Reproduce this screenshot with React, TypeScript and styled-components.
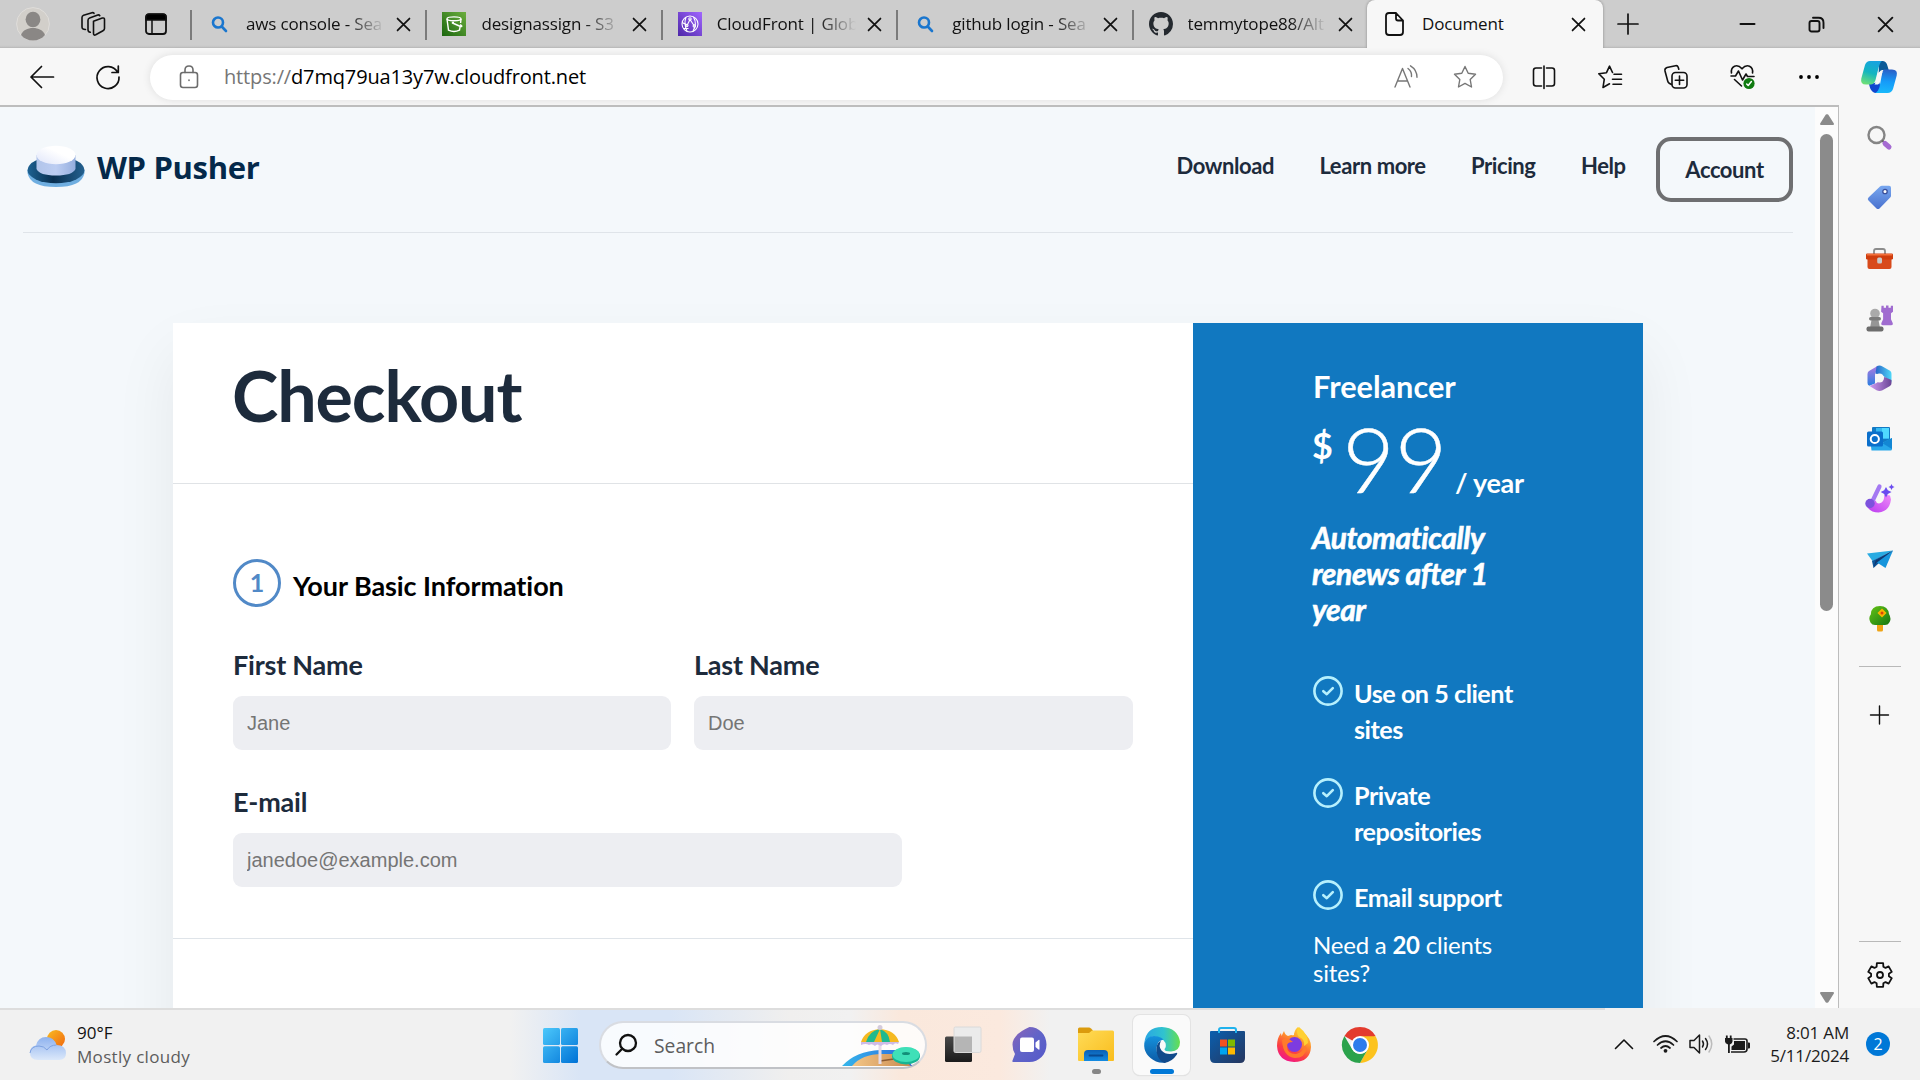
import React from "react";
import styled, { createGlobalStyle } from "styled-components";

const GlobalStyle = createGlobalStyle`
  *, *::before, *::after { box-sizing: border-box; }
  html, body { margin: 0; padding: 0; overflow: hidden; }
  body { background: #f7f7f7; }
  h1, h2, p, ul { margin: 0; padding: 0; }
  svg { display: block; flex: none; overflow: visible; }
`;

const ui = `"Open Sans", "Noto Sans", sans-serif`;
const lato = `Lato, "Open Sans", sans-serif`;

/* ---------- browser frame ---------- */

const Screen = styled.div`
  width: 1920px;
  height: 1080px;
  display: flex;
  flex-direction: column;
  overflow: hidden;
  font-family: ${ui};
  color: #111;
`;

const TabStrip = styled.header`
  height: 48px;
  display: flex;
  background: linear-gradient(#cdcdcd 45px, #c4c4c4 47px, #b4b4b4 48px);
`;

const StripTools = styled.div`
  width: 190px;
  display: flex;
  align-items: center;
  padding-left: 16px;
`;

const ToolSlot = styled.span<{ $w: number }>`
  width: ${(p) => p.$w}px;
  display: flex;
  justify-content: center;
`;

const TabItem = styled.div<{ $active?: boolean }>`
  width: ${(p) => (p.$active ? 236 : 235.4)}px;
  display: flex;
  align-items: center;
  padding: ${(p) => (p.$active ? "0 18px 0 15px" : "0 15px 0 16px")};
  background: ${(p) => (p.$active ? "#f7f7f7" : "transparent")};
  border-radius: ${(p) => (p.$active ? "8px 8px 0 0" : "0")};
  box-shadow: ${(p) => (p.$active ? "0 0 3px rgba(0,0,0,.35)" : "none")};
  clip-path: ${(p) => (p.$active ? "inset(0 -4px 0 -4px)" : "none")};
`;

const TabRule = styled.i`
  width: 2px;
  height: 30px;
  margin-top: 10px;
  margin-right: -2px;
  background: #7b7b7b;
`;

const Favicon = styled.span`
  width: 26px;
  display: flex;
  justify-content: center;
`;

const TabTitle = styled.span<{ $faded?: boolean }>`
  flex: 1;
  margin: 0 10px 0 14px;
  font-size: 17px;
  line-height: 24px;
  letter-spacing: -0.15px;
  white-space: nowrap;
  overflow: hidden;
  ${(p) =>
    p.$faded
      ? "-webkit-mask-image: linear-gradient(90deg,#000 calc(100% - 40px),transparent calc(100% - 2px)); mask-image: linear-gradient(90deg,#000 calc(100% - 40px),transparent calc(100% - 2px));"
      : ""}
`;

const WindowTools = styled.div`
  flex: 1;
  display: flex;
  align-items: center;
`;

const Push = styled.span`
  flex: 1;
`;

const Toolbar = styled.nav`
  height: 57px;
  display: flex;
  align-items: center;
  background: #f7f7f7;
  padding-left: 9px;
`;

const Address = styled.div`
  width: 1353px;
  height: 45px;
  margin: 1px 8px 0 9px;
  border-radius: 23px;
  background: #fff;
  box-shadow: 0 0 8px rgba(0, 0, 0, 0.1);
  display: flex;
  align-items: center;
  padding-left: 29px;
  padding-right: 18px;
`;

const Url = styled.span`
  flex: 1;
  margin-left: 25px;
  font-size: 20px;
  line-height: 30px;
  letter-spacing: -0.15px;
  color: #000;
  em {
    font-style: normal;
    color: #767676;
  }
`;

const Middle = styled.div`
  height: 903px;
  display: flex;
`;

const Frame = styled.div`
  width: 1839px;
  border-top: 2px solid #bdbdbd;
  border-right: 1px solid #bdbdbd;
  display: flex;
`;

const ScrollTrack = styled.div`
  width: 23px;
  background: #fcfcfc;
  display: flex;
  flex-direction: column;
  align-items: center;
  padding: 7px 0 5px;
`;

const ScrollThumb = styled.div`
  width: 13px;
  height: 477px;
  margin: 9px 0 auto;
  border-radius: 7px;
  background: #8b8b8b;
`;

const Sidebar = styled.aside`
  flex: 1;
  display: flex;
  flex-direction: column;
  align-items: center;
  background: #f7f7f7;
`;

const SideSlot = styled.span<{ $h?: number }>`
  height: ${(p) => p.$h ?? 60.2}px;
  display: flex;
  align-items: center;
`;

const SideRule = styled.i`
  width: 42px;
  height: 1px;
  margin-left: 1px;
  background: #b9b9b9;
`;

/* ---------- web page ---------- */

const Page = styled.main`
  width: 1815px;
  height: 901px;
  background: #f4f8fb;
  overflow: hidden;
  font-family: ${lato};
  color: #1d2b3c;
`;

const SiteHeader = styled.header`
  height: 126px;
  margin: 0 22px 0 23px;
  border-bottom: 1px solid #dfe4e9;
  display: flex;
`;

const Brand = styled.div`
  display: flex;
  margin: 38px auto 0 4px;
`;

const BrandName = styled.span`
  margin: 4px 0 0 12px;
  font: 700 31px/36px "Open Sans", sans-serif;
  letter-spacing: -0.35px;
  color: #04294a;
  height: 36px;
`;

const SiteNav = styled.nav`
  display: flex;
  gap: 45.4px;
  font-weight: 700;
  font-size: 22px;
  line-height: 26px;
  letter-spacing: -0.42px;
`;

const NavLink = styled.a`
  margin-top: 45.5px;
  height: 26px;
`;

const AccountButton = styled.a`
  width: 137px;
  height: 65px;
  margin: 30px 0 0 -15px;
  border: 4px solid #6e6f71;
  border-radius: 15px;
  display: flex;
  align-items: center;
  justify-content: center;
`;

const Card = styled.section`
  width: 1470px;
  height: 1100px;
  margin: 90px 0 0 173px;
  display: flex;
  background: #fff;
  box-shadow: 0 30px 60px rgba(0, 0, 0, 0.065);
`;

const FormSide = styled.div`
  width: 1020px;
`;

const CardTitle = styled.h1`
  height: 161px;
  padding: 30px 0 0 59px;
  border-bottom: 1px solid #e0e3e6;
  font-size: 70px;
  line-height: 84px;
  font-weight: 700;
  letter-spacing: -1.1px;
`;

const FormSection = styled.div`
  height: 455px;
  padding: 75px 0 0 60px;
  border-bottom: 1px solid #dfe4e9;
`;

const StepTitle = styled.div`
  display: flex;
  align-items: center;
  height: 48px;
  margin-bottom: 42px;
`;

const StepNumber = styled.span`
  width: 48px;
  height: 48px;
  border: 3px solid #5189c7;
  border-radius: 50%;
  color: #5189c7;
  display: flex;
  align-items: center;
  justify-content: center;
  font-size: 25px;
  padding-bottom: 2px;
  font-weight: 700;
`;

const StepName = styled.h2`
  margin-left: 12px;
  padding-top: 6px;
  color: #000;
  font-size: 27px;
  line-height: 32px;
  font-weight: 700;
  letter-spacing: -0.07px;
`;

const FieldRow = styled.div`
  display: flex;
  gap: 23px;
  margin-bottom: 35px;
`;

const Field = styled.label<{ $w: number }>`
  width: ${(p) => p.$w}px;
  display: flex;
  flex-direction: column;
  font-size: 27px;
  line-height: 32px;
  font-weight: 700;
  letter-spacing: -0.22px;
`;

const Input = styled.input`
  margin-top: 15px;
  margin-bottom: 1px;
  width: 100%;
  height: 54px;
  border: 0;
  border-radius: 9px;
  padding: 0 14px;
  background: #edeef2;
  font: 400 20px "Liberation Sans", Arial, sans-serif;
  &::placeholder {
    color: #757575;
    opacity: 1;
  }
`;

const PlanSide = styled.div`
  width: 450px;
  padding: 46px 112px 0 120px;
  background: #1178c0;
  color: #fff;
`;

const PlanName = styled.h2`
  font-size: 30.7px;
  line-height: 36px;
  font-weight: 700;
`;

const Price = styled.div`
  height: 107px;
  display: flex;
  white-space: nowrap;
`;

const Currency = styled.span`
  font-size: 36px;
  line-height: 43px;
  font-weight: 700;
  margin: 19px 0 0 -1px;
  flex: none;
  width: 30.5px;
`;

const Amount = styled.span`
  font-size: 90px;
  line-height: 107px;
  font-weight: 300;
  letter-spacing: 0.3px;
  -webkit-text-stroke: 0.5px #fff;
`;

const Period = styled.span`
  font-size: 27px;
  line-height: 32px;
  font-weight: 700;
  letter-spacing: -0.3px;
  margin: 62px 0 0 7.5px;
`;

const Renewal = styled.p`
  margin: 6.5px 0 0 -1px;
  font-size: 30px;
  line-height: 36px;
  font-weight: 700;
  font-style: italic;
  letter-spacing: -0.4px;
  -webkit-text-stroke: 0.6px #fff;
`;

const Features = styled.ul`
  margin-top: 48.5px;
  list-style: none;
  display: flex;
  flex-direction: column;
  gap: 30px;
`;

const Feature = styled.li`
  display: flex;
  gap: 11px;
  font-size: 25.2px;
  line-height: 36px;
  font-weight: 700;
  letter-spacing: -0.48px;
  svg {
    margin-top: 1px;
  }
`;

const Upsell = styled.p`
  margin-top: 16px;
  font-size: 24px;
  line-height: 28px;
  letter-spacing: -0.22px;
`;

/* ---------- taskbar ---------- */

const Taskbar = styled.footer`
  height: 72px;
  padding-top: 2px;
  display: flex;
  align-items: center;
  background:
    linear-gradient(#dddddd, #dddddd) 0 0 / 1605px 2px no-repeat,
    linear-gradient(90deg, transparent 510px, #d9e5f6 580px, #d9e5f6 670px, #f0efee 790px, transparent 850px, #fae8dc 900px, #fbe9de 1000px, transparent 1050px),
    #f1f1f1;
`;

const Weather = styled.div`
  width: 543px;
  padding-left: 29px;
  display: flex;
  align-items: center;
  gap: 10px;
  font-size: 17px;
  line-height: 24px;
  small {
    display: block;
    font-size: 17px;
    letter-spacing: 0.32px;
    color: #5c5c5c;
  }
`;

const SearchPill = styled.div`
  width: 328px;
  height: 48px;
  margin: 0 18px 0 21px;
  border: 2px solid #d9dce2;
  border-bottom-color: #c0c2c6;
  border-radius: 24px;
  background: rgba(255, 255, 255, 0.82);
  display: flex;
  align-items: center;
  padding-left: 14px;
  padding-right: 5px;
  font-size: 19.3px;
  color: #5d5d5d;
  span {
    margin: 0 auto 0 17px;
  }
`;

const AppTile = styled.div<{ $active?: boolean; $w?: number }>`
  width: ${(p) => p.$w ?? 66.3}px;
  height: 60px;
  display: flex;
  flex-direction: column;
  align-items: center;
  padding-top: 12px;
  background: ${(p) => (p.$active ? "#fafafa" : "transparent")};
  border-radius: 7px;
  box-shadow: ${(p) => (p.$active ? "0 0 0 1px #e3e3e3, 0 1px 1px #d5d5d5" : "none")};
  margin: ${(p) => (p.$active ? "0 4.3px" : "0")};
`;

const Running = styled.i<{ $active?: boolean }>`
  width: ${(p) => (p.$active ? 24 : 9)}px;
  height: 5px;
  margin-top: ${(p) => (p.$active ? 6 : 8)}px;
  border-radius: 3px;
  background: ${(p) => (p.$active ? "#0078d7" : "#868686")};
`;

const Tray = styled.div`
  display: flex;
  align-items: center;
  padding-bottom: 2px;
`;

const Clock = styled.div`
  width: 90px;
  text-align: right;
  font-size: 17px;
  line-height: 23px;
  letter-spacing: -0.2px;
  margin: 0 17px 0 4px;
  color: #1b1b1b;
  white-space: nowrap;
`;

const Badge = styled.span`
  width: 24px;
  height: 24px;
  margin-right: 30px;
  border-radius: 50%;
  background: #0078d7;
  color: #fff;
  font-size: 16px;
  line-height: 24px;
  text-align: center;
`;

/* ---------- drawings ---------- */

type LineProps = { w?: number; h?: number; box?: string; color?: string; sw?: number; children: React.ReactNode };
const Line = ({ w = 24, h = w, box = "0 0 24 24", color = "#111", sw = 1.6, children }: LineProps) => (
  <svg width={w} height={h} viewBox={box} fill="none" stroke={color} strokeWidth={sw} strokeLinecap="round" strokeLinejoin="round">
    {children}
  </svg>
);

const Cross = ({ s = 13, sw = 1.6 }: { s?: number; sw?: number }) => (
  <Line w={s} box="0 0 12 12" sw={sw}><path d="M.5.5l11 11M11.5.5l-11 11" /></Line>
);

const Avatar = () => (
  <svg width="34" height="34" viewBox="0 0 34 34">
    <circle cx="17" cy="17" r="16.4" fill="#d2cfca" stroke="#e0dedb" />
    <ellipse cx="17" cy="12.5" rx="7.4" ry="7.7" fill="#8a8785" />
    <path d="M5 28c2-5 6.500-7 12-7s10 2 12 7c-3 3.600-7 5.500-12 5.500S8 31.600 5 28z" fill="#8a8785" />
  </svg>
);

const WorkspacesIcon = () => (
  <Line w={24} h={24} box="0 0 24 24" sw={1.6}>
    <path d="M12.500 9.300l8.800-3.200q2.200-.6 2.200 1.500v9q0 1.500-1.500 2.200l-7.300 4q-2.200 1-2.200-1.500z" />
    <path d="M9.300 20.300q-2.300-.4-2.300-2.500V8.200q0-1.600 1.600-2.200l8.200-3q1.300-.4 2 .7" />
    <path d="M4.500 17.500Q1 17.600 1 15V5.500q0-1.600 1.600-2.200L11 .8q1.300-.4 2 .5" />
  </Line>
);

const VerticalTabsIcon = () => (
  <svg width="22" height="22" viewBox="0 0 22 22">
    <rect x="1" y="1.500" width="20" height="19.500" rx="3" fill="none" stroke="#111" strokeWidth="1.800" />
    <path d="M1 7V4q0-3 3-3h14q3 0 3 3v3zM7 7v14" fill="#000" stroke="#111" strokeWidth="1.500" />
  </svg>
);

const BingGlass = () => (
  <Line w={17} box="0 0 17 17" color="#1a76ce" sw={2.6}><circle cx="7" cy="6.500" r="5" /><path d="M10.700 10.500l4.300 4.500" /></Line>
);

const BucketIcon = () => (
  <svg width="24" height="24" viewBox="0 0 24 24">
    <defs><linearGradient id="s3" x1="0" y1="1" x2="1" y2="0"><stop stopColor="#1b660f" /><stop offset="1" stopColor="#6cae3e" /></linearGradient></defs>
    <path fill="url(#s3)" d="M0 0h24v24H0z" />
    <g fill="none" stroke="#fff" strokeWidth="1.400"><ellipse cx="12" cy="6.800" rx="7" ry="1.900" /><path d="M5 7l1.500 11.200q5.500 2.500 11 0l.8-4.500M19 7l-.4 4M10.500 11l8 3.500q1.500.5 1.200-.7l-1.500-1.300" /><path d="M9.800 10.700h2.200" strokeWidth="2" /></g>
  </svg>
);

const CloudFrontIcon = () => (
  <svg width="24" height="24" viewBox="0 0 24 24">
    <defs><linearGradient id="cf" x1="0" y1="1" x2="1" y2="0"><stop stopColor="#4d27a8" /><stop offset="1" stopColor="#a166ff" /></linearGradient></defs>
    <path fill="url(#cf)" d="M0 0h24v24H0z" />
    <g fill="none" stroke="#fff" strokeWidth="1.100"><circle cx="12" cy="12" r="8" /><path d="M8 5q-2.500 7 1 14M15.500 5q4 7-.5 14M4.300 10.500l5 3M12 7.500l4 6M9 13.500l3-6M5.500 16.500h5" /><circle cx="12" cy="7" r="1.200" /><circle cx="16.300" cy="14" r="1.200" /><circle cx="8.800" cy="13.500" r="1.200" /></g>
  </svg>
);

const GithubMark = () => (
  <svg width="24" height="24" viewBox="0 0 16 16" fill="#24292f">
    <path d="M8 0C3.580 0 0 3.580 0 8c0 3.540 2.290 6.530 5.470 7.590.4.070.55-.17.55-.38 0-.19-.01-.82-.01-1.490-2.010.37-2.530-.49-2.690-.94-.09-.23-.48-.94-.82-1.130-.28-.15-.68-.52-.01-.53.63-.01 1.080.58 1.230.82.72 1.210 1.870.87 2.330.66.070-.52.28-.87.51-1.070-1.780-.2-3.640-.89-3.640-3.950 0-.87.31-1.590.82-2.150-.08-.2-.36-1.020.08-2.120 0 0 .67-.21 2.200.82.64-.18 1.320-.27 2-.27s1.360.09 2 .27c1.530-1.040 2.200-.82 2.200-.82.44 1.100.16 1.920.08 2.120.51.56.82 1.270.82 2.150 0 3.070-1.870 3.750-3.650 3.950.29.25.54.73.54 1.480 0 1.070-.01 1.930-.01 2.200 0 .21.15.46.55.38A8.010 8.010 0 0016 8c0-4.420-3.580-8-8-8z" />
  </svg>
);

const FileIcon = () => (
  <Line w={19} h={24} box="0 0 19 24" sw={1.8}><path d="M11 1H4Q1 1 1 4v16q0 3 3 3h11q3 0 3-3V8.500zM11 1v5.500q0 2 2 2h5" /></Line>
);

const StarPath = "M12 1.500l3.200 6.800 7.300 1-5.300 5.200 1.300 7.500L12 18.400 5.500 22l1.300-7.500L1.500 9.300l7.300-1z";

const FavoritesIcon = () => (
  <Line><path d="M14.500 7.500L11.500 1.200 8.500 7.700.8 8.800l5.500 5.400L5 22.500l6.500-3.700M16 9.300h7.500M14.500 14.200h9M15 19.200h8.500" /></Line>
);

const CollectionsIcon = () => (
  <Line><rect x="8" y="7.500" width="15" height="15.500" rx="3.500" /><path d="M15.500 11v8.500M11.300 15.300h8.400M7.500 19.500l-2.300-1.300q-1.200-.7-1.500-2.200L1 6Q.500 3.300 3 2.500L11.500.7q2-.4 2.700 1.500l.6 2" /></Line>
);

const HealthIcon = () => (
  <svg width="26" height="26" viewBox="0 0 26 26" fill="none" stroke="#111" strokeWidth="1.600" strokeLinecap="round" strokeLinejoin="round">
    <path d="M1.500 9Q.700 4 4.500 2.200 8.500.7 12 4.800 15.500.7 19.500 2.200 23.300 4 22.500 9M1 12h4.500l3-5 4 9 3.500-6 1.500 2.500H24M4.500 15.500l7 6.500" />
    <circle cx="19" cy="19.500" r="5.600" fill="#0f7b10" stroke="none" /><path d="M16.700 20l1.500 1.500 3.200-4" stroke="#fff" strokeWidth="1.500" />
  </svg>
);

const CopilotLogo = () => (
  <svg width="36" height="32" viewBox="0 0 36 32">
    <defs>
      <linearGradient id="cpA" x1=".6" y1="0" x2=".3" y2="1"><stop stopColor="#17a3e0" /><stop offset=".5" stopColor="#13b5c0" /><stop offset="1" stopColor="#6ddf78" /></linearGradient>
      <linearGradient id="cpB" x1=".5" y1="0" x2=".4" y2="1"><stop stopColor="#2a60c8" /><stop offset=".5" stopColor="#159af8" /><stop offset="1" stopColor="#19b9fb" /></linearGradient>
    </defs>
    <path d="M18 0h4q3.500.5 4.500 5l1.200 4h-6q-3 0-4 4z" fill="#0b5a97" />
    <path d="M8 23q1.500 8 6 9h8l-4-11z" fill="#1146cf" />
    <path d="M9 0h12q-2 1-3.500 7l-3 12q-1.500 4.500-5 4.500H5q-6 0-4.700-6L4 4Q5.500 0 9 0z" fill="url(#cpA)" />
    <path d="M23 8.500h8q6 0 4.700 6L32 28q-1.500 4-5.500 4H14q3-1 4.500-6L21 13q1-4.500 2-4.500z" fill="url(#cpB)" />
    <path d="M18.500 11h3q-.8 1.500-1.300 3.500l-1.700 6.500q-.5 2-1.500 2.500h-3.500q1-1.500 1.700-4.500l1.600-6q.4-1.700 1.700-2z" fill="#f7f7f7" />
  </svg>
);

const Triangle = ({ down }: { down?: boolean }) => (
  <svg width="14" height="11" viewBox="0 0 14 11" fill="#8b8b8b" stroke="#8b8b8b" strokeLinejoin="round" strokeWidth="2">
    <path d={down ? "M1 1h12L7.500 9.800h-1z" : "M1 10h12L7.500 1.200h-1z"} />
  </svg>
);

const WpPusherMark = () => (
  <svg width="58" height="43" viewBox="0 0 58 43">
    <defs>
      <linearGradient id="wpSide"><stop stopColor="#b2c5ea" /><stop offset=".5" stopColor="#bccdf2" /><stop offset="1" stopColor="#95aede" /></linearGradient>
      <linearGradient id="wpTop" x1="0" y1="1" x2="1" y2="0"><stop stopColor="#dfe5fa" /><stop offset=".6" stopColor="#fff" /></linearGradient>
      <linearGradient id="wpRing"><stop stopColor="#1e6292" /><stop offset=".45" stopColor="#082f50" /><stop offset="1" stopColor="#24618f" /></linearGradient>
    </defs>
    <path d="M.5 25v3Q3 42 29 42t28.500-14v-3z" fill="#6faee0" />
    <ellipse cx="29" cy="25" rx="28.500" ry="13.300" fill="url(#wpRing)" />
    <path d="M9.500 10v14q3 6.500 19.500 6.500T48.500 24V10z" fill="url(#wpSide)" />
    <ellipse cx="29" cy="10" rx="19.500" ry="9.300" fill="url(#wpTop)" />
  </svg>
);

const CheckCircle = () => (
  <Line w={30} box="0 0 30 30" color="#b6f0fd" sw={2.6}><circle cx="15" cy="15" r="13.600" /><path d="M10.300 15.200l3.500 3 6-6" /></Line>
);

const SideSearch = () => (
  <svg width="25" height="24" viewBox="0 0 25 24" fill="none"><circle cx="9.500" cy="9" r="8" stroke="#858585" strokeWidth="2.400" /><path d="M15 14.500l2 1.800" stroke="#666" strokeWidth="2.200" /><path d="M18 17.500l4 3.500" stroke="#a56bd2" strokeWidth="5" strokeLinecap="round" /></svg>
);
const SideTag = () => (
  <svg width="25" height="25" viewBox="0 0 25 25"><defs><linearGradient id="tg" x1="0" y1="0" x2="0" y2="1"><stop stopColor="#78a7ef" /><stop offset="1" stopColor="#4a72cf" /></linearGradient></defs><path d="M13 1.500q.7-.7 2-.7h7q2 0 2 2v8q0 1-.8 1.800L12.500 23.400q-1.500 1-3 0L1.500 15.500q-1.500-1.700 0-3z" fill="url(#tg)" /><circle cx="18" cy="6.500" r="2.200" fill="#fff" stroke="#3a4f9b" strokeWidth="1.300" /></svg>
);
const SideToolbox = () => (
  <svg width="27" height="21" viewBox="0 0 27 21"><path d="M8 6V3q0-2 2-2h7q2 0 2 2v3" fill="none" stroke="#8c8c8c" strokeWidth="1.800" /><rect x="1.500" y="9" width="24" height="12" rx="2" fill="#d84a1b" /><rect y="5.500" width="27" height="6" rx="1.200" fill="#cf3d0e" /><path d="M1 6h25v1.500H1z" fill="#f3703a" /><rect x="11.200" y="9.500" width="4.800" height="6" rx="1.500" fill="#c9c9c9" /></svg>
);
const SideChess = () => (
  <svg width="27" height="27" viewBox="0 0 27 27"><path d="M15.500.8h2.200v2h2.300V.5h2.500v2.300h2.300v-2H27v6l-2 1.500v6l1.800 4q.5 2-1.500 2h-8.500q-2 0-1.500-2l1.800-4v-6l-2-1.500z" fill="#a06cd0" /><circle cx="9" cy="8.500" r="4.800" fill="#aaa" /><path d="M5.500 15h7l1.500 8H4z" fill="#969696" /><rect x="3" y="12" width="12" height="3.500" rx="1.700" fill="#7c7c7c" /><rect x=".5" y="21.500" width="17" height="5" rx="2" fill="#6d6d6d" /></svg>
);
const Side365 = () => (
  <svg width="25" height="26" viewBox="0 0 25 26"><defs><linearGradient id="o1" x1="0" y1="0" x2="0" y2="1"><stop stopColor="#b07be0" /><stop offset="1" stopColor="#2a7de0" /></linearGradient><linearGradient id="o2"><stop stopColor="#2864c8" /><stop offset="1" stopColor="#4fd8f8" /></linearGradient><linearGradient id="o3"><stop stopColor="#cf9af2" /><stop offset="1" stopColor="#6a4696" /></linearGradient></defs><path d="M11 .8L2 6Q.500 7 .500 9v9q0 2 1.800 2.800L8 18.500V9.500z" fill="url(#o1)" /><path d="M9.500 1.500q3-2 6 0l7.500 4.300q1.500 1 1.500 3V17L17 11.500l-8.500-3z" fill="url(#o2)" /><path d="M2.500 21l7-3 8-6 7 3v3q0 2-1.500 3l-7.500 4.200q-3 1.500-6 0z" fill="url(#o3)" /><circle cx="12.500" cy="13" r="4.500" fill="#f7f7f7" /></svg>
);
const SideOutlook = () => (
  <svg width="25" height="24" viewBox="0 0 25 24"><rect x="5" y="0" width="18" height="15" rx="1" fill="#1279c4" /><path d="M9 1h13v11H9z" fill="#35b8f1" /><path d="M15 1h7v10h-7z" fill="#50d9ff" /><path d="M3.500 15.500H16l9-4.500v11q0 1.500-1.500 1.500h-19z" fill="#28a8ea" /><path d="M15 16l10-5v11z" fill="#1387d4" /><rect x="0" y="4.500" width="16" height="15" rx="1.500" fill="#0a6fcb" /><circle cx="7.800" cy="12" r="4.100" fill="none" stroke="#fff" strokeWidth="2" /></svg>
);
const SideDesigner = () => (
  <svg width="29" height="29" viewBox="0 0 29 29"><defs><linearGradient id="ds" x1="0" y1="1" x2="1" y2="0"><stop stopColor="#b838f0" /><stop offset="1" stopColor="#f08cf8" /></linearGradient></defs><path d="M1.500 22q4 6.500 12 6.500 11-1 12.500-13l-1-4-6-1q1 8-5 9-3 0-3-3z" fill="url(#ds)" /><path d="M14.500 2.500L7.500 17" stroke="#a479f2" strokeWidth="4.200" strokeLinecap="round" /><circle cx="5" cy="19.500" r="4.700" fill="#7d52dd" /><path d="M21 3l1.800 3.300L26.500 8l-3.700 2L21 13.500 19.200 10l-3.500-2 3.500-1.700zM26.500 0l1 2 2 1-2 1-1 2-1-2-2-1 2-1z" fill="#6a4bf0" /></svg>
);
const SidePlane = () => (
  <svg width="26" height="19" viewBox="0 0 26 19"><path d="M0 3.500L26 .5 5.500 11z" fill="#29abe2" /><path d="M26 .5L5 11l1.500 7z" fill="#0d569b" /><path d="M26 .5L18.500 18 10 12.500z" fill="#1795dc" /><path d="M26 .5L9.500 12.500 6.500 18l2-7.500z" fill="#12386f" /></svg>
);
const SideTree = () => (
  <svg width="22" height="26" viewBox="0 0 22 26"><defs><linearGradient id="tr" x1="0" y1="0" x2="1" y2="1"><stop stopColor="#66c414" /><stop offset="1" stopColor="#157714" /></linearGradient></defs><path d="M8 16h6v8q0 1.500-1.500 1.500h-3Q8 25.500 8 24z" fill="#efa416" /><path d="M11 0q8 0 9 8 3 5 0 9-1 2-4 2H6q-3 0-4.500-2.500Q-1 12 1.800 8.500 2 0 11 0z" fill="url(#tr)" /><path d="M13 3.500L16.500 7 13 10.500 9.500 7z" fill="#f7b500" stroke="#f7b500" strokeWidth="1.500" /><circle cx="13" cy="7" r="1.500" fill="#d9420b" /></svg>
);
const gearPoints = () => {
  let d = "";
  for (let i = 0; i < 6; i++) {
    const a = i * 60 - 90;
    [[-22, 9], [-15, 12.2], [15, 12.2], [22, 9]].forEach(([o, r], j) => {
      const t = ((a + o) * Math.PI) / 180;
      d += `${i === 0 && j === 0 ? "M" : "L"}${(13 + r * Math.cos(t)).toFixed(2)} ${(13 + r * Math.sin(t)).toFixed(2)}`;
    });
  }
  return d + "Z";
};
const Gear = () => (
  <Line w={26} box="0 0 26 26" sw={1.8}><path d={gearPoints()} /><circle cx="13" cy="13" r="3" /></Line>
);

const WeatherIcon = () => (
  <svg width="38" height="31" viewBox="0 0 38 31"><defs><linearGradient id="cl" x1="0" y1="0" x2="0" y2="1"><stop stopColor="#8eb2ef" /><stop offset="1" stopColor="#dbe8fa" /></linearGradient><linearGradient id="sn" x1="0" y1="0" x2="1" y2="1"><stop stopColor="#f9bc22" /><stop offset="1" stopColor="#f1660e" /></linearGradient></defs><circle cx="27" cy="9" r="9" fill="url(#sn)" /><path d="M9 30q-8 0-8-7.500 0-6 6-7Q9 7 17 7q8 0 10.500 8Q36.500 15 37 23q0 7-7 7z" fill="url(#cl)" /><path d="M1 23q1 -7 9-7 5 0 8 4 3-5 9.500-5" fill="none" stroke="#7ea2e2" strokeWidth="1" /></svg>
);
const WindowsLogo = () => (
  <svg width="35" height="35" viewBox="0 0 35 35"><defs><linearGradient id="wn" gradientUnits="userSpaceOnUse" x1="0" y1="0" x2="35" y2="35"><stop stopColor="#4cc8fb" /><stop offset="1" stopColor="#0072d6" /></linearGradient></defs><g fill="url(#wn)"><rect width="17" height="17" rx="1.500" /><rect x="18" width="17" height="17" rx="1.500" /><rect y="18.300" width="17" height="16.700" rx="1.500" /><rect x="18" y="18.300" width="17" height="16.700" rx="1.500" /></g></svg>
);
const BeachArt = () => (
  <svg width="78" height="41" viewBox="0 0 78 41">
    <defs><linearGradient id="sea"><stop stopColor="#35b6ea" /><stop offset="1" stopColor="#2c66df" /></linearGradient><linearGradient id="sand"><stop stopColor="#f3c687" /><stop offset="1" stopColor="#c98a50" /></linearGradient></defs>
    <path d="M0 41Q14 26 38 25h22l10 16z" fill="url(#sea)" />
    <path d="M10 41Q20 29 40 29h15l14 12z" fill="url(#sand)" />
    <path d="M38 36l14-2" stroke="#8c5a32" strokeWidth="1.500" />
    <path d="M38 3v36" stroke="#e5dbe8" strokeWidth="3" />
    <path d="M19 17Q23 5 38 4q15 1 19 13z" fill="#f5b921" />
    <path d="M24 17Q27 6 38 4l-6 13zM38 4q9 3 10 13h-8z" fill="#1fb98e" />
    <path d="M19 17h38l-1 2q-3-2-5 1-3-2-6 0-3-2-6 1-4-3-6 0-3-3-6-1-3-2-8 0z" fill="#cdbbe8" />
    <circle cx="38" cy="2.500" r="2.500" fill="#d5cbdc" />
    <ellipse cx="64" cy="31" rx="14" ry="8.500" fill="#18b493" /><ellipse cx="64" cy="29.500" rx="13.500" ry="7.500" fill="#3fe0b8" /><ellipse cx="64" cy="28.500" rx="4" ry="1.500" fill="#128f78" />
  </svg>
);
const TaskView = () => (
  <svg width="36" height="35" viewBox="0 0 36 35"><defs><linearGradient id="tv" x1="0" y1="0" x2="0" y2="1"><stop stopColor="#494949" /><stop offset="1" stopColor="#1b1b1b" /></linearGradient></defs><rect y="9.500" width="27" height="25.500" rx="1.500" fill="url(#tv)" /><rect x="9" width="27" height="25.500" rx="1.500" fill="#ebebeb" stroke="#dadada" /><path d="M9.500 9.500H27V25H9.500z" fill="#b5b5b5" /></svg>
);
const ChatIcon = () => (
  <svg width="35" height="35" viewBox="0 0 35 35"><defs><linearGradient id="ch" x1="0" y1="0" x2="1" y2="1"><stop stopColor="#8b63b8" /><stop offset=".5" stopColor="#6064c8" /><stop offset="1" stopColor="#5558c9" /></linearGradient></defs><path d="M17.500 0C27 0 34.500 7.500 34.500 17.500S27 35 17.500 35H1q-1 0-.5-1.500L3 27Q.500 23 .500 17.500.500 7.500 17.500 0z" fill="url(#ch)" /><rect x="8" y="10.500" width="14" height="14.500" rx="2" fill="#fff" /><path d="M23.500 15.500l3-2.500q1-.5 1 .5V22q0 1-1 .5l-3-2.500z" fill="#fff" /></svg>
);
const FolderIcon = () => (
  <svg width="36" height="34" viewBox="0 0 36 34"><defs><linearGradient id="fo" x1="0" y1="0" x2="1" y2="1"><stop stopColor="#ffdb57" /><stop offset="1" stopColor="#f9bd1d" /></linearGradient><linearGradient id="fb" x1="0" y1="0" x2="0" y2="1"><stop stopColor="#0c60b4" /><stop offset="1" stopColor="#148be2" /></linearGradient></defs><path d="M0 2Q0 .5 1.500.5H11q1 0 2 1l2 2L12 7H0z" fill="#db9b0d" /><path d="M0 6h11l3-2.500h20.500q1.500 0 1.500 1.500v28q0 1-1 1H1q-1 0-1-1z" fill="url(#fo)" /><path d="M6 34V27q0-4 4-4h16q4 0 4 4v7z" fill="url(#fb)" /><path d="M11.500 28.500h13" stroke="#084a92" strokeWidth="1.800" strokeLinecap="round" /></svg>
);
const EdgeIcon = () => (
  <svg width="36" height="36" viewBox="0 0 36 36"><defs><linearGradient id="e1"><stop stopColor="#2aa6e4" /><stop offset=".55" stopColor="#30c3cf" /><stop offset="1" stopColor="#66df4e" /></linearGradient><linearGradient id="e2" x1="0" y1="0" x2="0" y2="1"><stop stopColor="#1592dd" /><stop offset="1" stopColor="#0c59a4" /></linearGradient></defs><path d="M.3 16Q2 0 18 0q16 1 18 15 0 9-9 9.500-7 0-6.500-2.500 2-2 1-6Q18 10 10 9.500q-7 .5-9.700 6.500z" fill="url(#e1)" /><path d="M.3 16Q3 9 10 9q6 0 9.500 3.500-6 1-7 8Q12 30 22 35.500q-5 1-10-1Q-1 28 .3 16z" fill="url(#e2)" /><path d="M12.500 21q.5-5.500 4.500-7-3 5 .5 9.500 5 5.500 14.500 2.500 2-.7.9 1.500-5 7.500-12.500 8.500-8.500-4-7.900-15z" fill="#114a8b" /></svg>
);
const StoreIcon = () => (
  <svg width="35" height="36" viewBox="0 0 35 36"><defs><linearGradient id="st" x1="0" y1="0" x2="1" y2="1"><stop stopColor="#0a5fae" /><stop offset="1" stopColor="#26365e" /></linearGradient></defs><path d="M9 6V3q0-2 2-2h13q2 0 2 2v3" fill="none" stroke="#1fb2ed" strokeWidth="2" /><path d="M0 5q0-1 1-1h33q1 0 1 1v26q0 5-5 5H5q-5 0-5-5z" fill="url(#st)" /><path d="M9 6V4M26 6V4" stroke="#1fb2ed" strokeWidth="2" /><path d="M10 12.500h7v7h-7z" fill="#f25022" /><path d="M18 12.500h7v7h-7z" fill="#7fba00" /><path d="M10 20.500h7v7h-7z" fill="#00a4ef" /><path d="M18 20.500h7v7h-7z" fill="#ffb900" /></svg>
);
const FirefoxIcon = () => (
  <svg width="35" height="36" viewBox="0 0 35 36"><defs><linearGradient id="ff" x1=".8" y1="0" x2=".3" y2="1"><stop stopColor="#ffe03a" /><stop offset=".35" stopColor="#ff9a2a" /><stop offset=".7" stopColor="#fb4040" /><stop offset="1" stopColor="#f0148c" /></linearGradient></defs><path d="M21 0q3 2 4 6 1-1 1-1 8 6 8 15-1 15-17 15Q1 34 0 19 0 11 4 6l.5 3L7 4q1 4 4 5l3-1q4 1 3-1 1-5 4-7z" fill="url(#ff)" /><circle cx="17.500" cy="17.500" r="7.500" fill="#7d3be0" /><path d="M5 13q4-3 7-1l4 3q-6 0-6 4 0 8 9 8 8-2 8-9l3 3q-2 10-12 10Q6 30 5 13z" fill="#ff7a2c" /><path d="M22 10q6 2 5 9l4-3Q31 7 22 0q-4 5 0 10z" fill="#ffd033" /></svg>
);
const ChromeIcon = () => (
  <svg width="36" height="36" viewBox="0 0 36 36"><path d="M18 18L2.410 9A18 18 0 0 1 33.590 9z" fill="#e33b2e" /><path d="M18 9.200H33.600A18 18 0 0 1 18 36l7.700-13.500z" fill="#fcc31e" /><path d="M2.410 9L10.300 22.500A9 9 0 0 0 25.700 22.500L18 36A18 18 0 0 1 2.410 9z" fill="#2ba24c" /><circle cx="18" cy="18" r="9" fill="#fff" /><circle cx="18" cy="18" r="7" fill="#2f7cec" /></svg>
);
const WifiIcon = () => (
  <svg width="25" height="18" viewBox="0 0 25 18" fill="none" stroke="#1b1b1b" strokeWidth="1.700" strokeLinecap="round"><path d="M1 6.500q11.500-11 23 0M4.500 10q8-7.500 16 0M8 13q4.500-4 9 0" /><circle cx="12.500" cy="15.800" r="1.900" fill="#1b1b1b" stroke="none" /></svg>
);
const SpeakerIcon = () => (
  <svg width="25" height="20" viewBox="0 0 25 20" fill="none" stroke="#1b1b1b" strokeWidth="1.500" strokeLinecap="round" strokeLinejoin="round"><path d="M1 6.500h4L10.500 1v18L5 13.500H1zM13.500 7q2 3 0 6M16.500 4.500q4 5.500 0 11" /><path d="M20 2q5.500 8 0 16" stroke="#bcbcbc" /></svg>
);
const BatteryIcon = () => (
  <svg width="25" height="19" viewBox="0 0 25 19"><path d="M8.500 4H20q2 0 2 2v8q0 3-3 3H6" fill="none" stroke="#1b1b1b" strokeWidth="1.600" /><path d="M9 6h11v9H6.500v-3.500L9 9.500zM23 7.500h1q1 0 1 1v4q0 1-1 1h-1z" fill="#1b1b1b" /><path d="M1.800.5v3M5.700.5v3" stroke="#1b1b1b" strokeWidth="1.800" /><path d="M0 3h7.500v3.500q0 2-2.700 3V18H3V9.500q-3-1-3-3z" fill="#1b1b1b" /></svg>
);

/* ---------- composition ---------- */

const tabs = [
  { title: "aws console - Sea", icon: <BingGlass /> },
  { title: "designassign - S3", icon: <BucketIcon /> },
  { title: "CloudFront | Glob", icon: <CloudFrontIcon /> },
  { title: "github login - Sea", icon: <BingGlass /> },
  { title: "temmytope88/Alt", icon: <GithubMark /> },
];

const toolbarIcons = [
  <Line key="split"><path d="M9.500 3H4Q1.500 3 1.500 5.500v13Q1.500 21 4 21h5.500M14.500 3H20q2.500 0 2.500 2.500v13Q22.500 21 20 21h-5.500M12 1v22.500" /></Line>,
  <FavoritesIcon key="fav" />,
  <CollectionsIcon key="col" />,
  <HealthIcon key="health" />,
  <svg key="more" width="20" height="4" viewBox="0 0 20 4"><circle cx="2" cy="2" r="1.900" /><circle cx="10" cy="2" r="1.900" /><circle cx="18" cy="2" r="1.900" /></svg>,
];

const sideIcons = [SideSearch, SideTag, SideToolbox, SideChess, Side365, SideOutlook, SideDesigner, SidePlane, SideTree];

const features = ["Use on 5 client sites", "Private repositories", "Email support"];

const BrowserTabs = () => (
  <TabStrip>
    <StripTools>
      <ToolSlot $w={34}><Avatar /></ToolSlot>
      <ToolSlot $w={86}><WorkspacesIcon /></ToolSlot>
      <ToolSlot $w={40}><VerticalTabsIcon /></ToolSlot>
    </StripTools>
    {tabs.map((t) => (
      <React.Fragment key={t.title}>
        <TabRule />
        <TabItem>
          <Favicon>{t.icon}</Favicon>
          <TabTitle $faded>{t.title}</TabTitle>
          <Cross />
        </TabItem>
      </React.Fragment>
    ))}
    <TabItem $active>
      <Favicon><FileIcon /></Favicon>
      <TabTitle>Document</TabTitle>
      <Cross />
    </TabItem>
    <WindowTools>
      <ToolSlot $w={50}><Line w={20} box="0 0 20 20" sw={1.7}><path d="M10 0v20M0 10h20" /></Line></ToolSlot>
      <Push />
      <ToolSlot $w={69}><Line w={15} h={2} box="0 0 15 2" sw={2}><path d="M.5 1h14" /></Line></ToolSlot>
      <ToolSlot $w={69}><Line w={15} box="0 0 15 15" sw={1.9}><rect x="0.500" y="4" width="10" height="10.500" rx="2" /><path d="M4 .8h5.500q5 0 5 5V11" /></Line></ToolSlot>
      <ToolSlot $w={69}><Cross s={15} sw={1.5} /></ToolSlot>
    </WindowTools>
  </TabStrip>
);

const BrowserToolbar = () => (
  <Toolbar>
    <ToolSlot $w={66}><Line sw={1.7}><path d="M23.500 12H1M11.500 1.500L1 12l10.500 10.500" /></Line></ToolSlot>
    <ToolSlot $w={66}><Line w={24} sw={1.7}><path d="M21.500 7A11 11 0 1 0 23 12M22.300 1v6.500H16" /></Line></ToolSlot>
    <Address>
      <Line w={20} h={24} box="0 0 20 24" color="#6c6c6c"><rect x="1.500" y="7.500" width="17" height="15" rx="2.500" /><path d="M6 7.500V5q0-4 4-4t4 4v2.500M10 15v.4" /></Line>
      <Url><em>https://</em>d7mq79ua13y7w.cloudfront.net</Url>
      <ToolSlot $w={78}>
        <Line color="#777" sw={1.4}><path d="M1 22L8.500 3.500 16 22M3.700 16h9.700M14 3.500q4 3 3.500 8M16.500.8q6.500 4 6.500 11.500" /></Line>
      </ToolSlot>
      <ToolSlot $w={40}><Line color="#777" sw={1.4}><path d={StarPath} /></Line></ToolSlot>
    </Address>
    {toolbarIcons.map((icon) => (
      <ToolSlot key={icon.key} $w={66.2}>{icon}</ToolSlot>
    ))}
    <ToolSlot $w={74}><CopilotLogo /></ToolSlot>
  </Toolbar>
);

const CheckoutPage = () => (
  <Page>
    <SiteHeader>
      <Brand><WpPusherMark /><BrandName>WP Pusher</BrandName></Brand>
      <SiteNav>
        {["Download", "Learn more", "Pricing", "Help"].map((n) => <NavLink key={n}>{n}</NavLink>)}
        <AccountButton>Account</AccountButton>
      </SiteNav>
    </SiteHeader>
    <Card>
      <FormSide>
        <CardTitle>Checkout</CardTitle>
        <FormSection>
          <StepTitle><StepNumber>1</StepNumber><StepName>Your Basic Information</StepName></StepTitle>
          <FieldRow>
            <Field $w={438}>First Name<Input placeholder="Jane" /></Field>
            <Field $w={439}>Last Name<Input placeholder="Doe" /></Field>
          </FieldRow>
          <FieldRow>
            <Field $w={669}>E-mail<Input placeholder="janedoe@example.com" /></Field>
          </FieldRow>
        </FormSection>
      </FormSide>
      <PlanSide>
        <PlanName>Freelancer</PlanName>
        <Price><Currency>$</Currency><Amount>99</Amount><Period>/ year</Period></Price>
        <Renewal>Automatically renews after 1 year</Renewal>
        <Features>
          {features.map((f) => <Feature key={f}><CheckCircle /><span>{f}</span></Feature>)}
        </Features>
        <Upsell>Need a <b>20</b> clients sites?</Upsell>
      </PlanSide>
    </Card>
  </Page>
);

export default function App() {
  return (
    <Screen>
      <GlobalStyle />
      <BrowserTabs />
      <BrowserToolbar />
      <Middle>
        <Frame>
          <CheckoutPage />
          <ScrollTrack><Triangle /><ScrollThumb /><Triangle down /></ScrollTrack>
        </Frame>
        <Sidebar>
          <SideSlot $h={2.6} />
          {sideIcons.map((Icon, i) => <SideSlot key={i}><Icon /></SideSlot>)}
          <SideSlot $h={16.6} />
          <SideRule />
          <SideSlot $h={96}><Line w={18} box="0 0 18 18" sw={1.4}><path d="M8.500 0v18M-.5 9h18" /></Line></SideSlot>
          <Push />
          <SideRule />
          <SideSlot $h={66}><Gear /></SideSlot>
        </Sidebar>
      </Middle>
      <Taskbar>
        <Weather><WeatherIcon /><div>90°F<small>Mostly cloudy</small></div></Weather>
        <WindowsLogo />
        <SearchPill>
          <Line w={22} box="0 0 22 22" sw={2.3}><circle cx="13" cy="9" r="8" /><path d="M7.200 14.800L1.500 20.500" /></Line>
          <span>Search</span>
          <BeachArt />
        </SearchPill>
        <AppTile $w={36}><TaskView /></AppTile>
        <AppTile $w={96}><ChatIcon /></AppTile>
        <AppTile $w={38}><FolderIcon /><Running /></AppTile>
        <AppTile $w={14} />
        <AppTile $w={57} $active><EdgeIcon /><Running $active /></AppTile>
        <AppTile><StoreIcon /></AppTile>
        <AppTile><FirefoxIcon /></AppTile>
        <AppTile><ChromeIcon /></AppTile>
        <Push />
        <Tray>
          <ToolSlot $w={49}><Line w={18} h={10} box="0 0 18 10"><path d="M.5 9.500L9 1l8.500 8.500" /></Line></ToolSlot>
          <ToolSlot $w={35}><WifiIcon /></ToolSlot>
          <ToolSlot $w={36}><SpeakerIcon /></ToolSlot>
          <ToolSlot $w={36}><BatteryIcon /></ToolSlot>
          <Clock>8:01 AM<br />5/11/2024</Clock>
          <Badge>2</Badge>
        </Tray>
      </Taskbar>
    </Screen>
  );
}
